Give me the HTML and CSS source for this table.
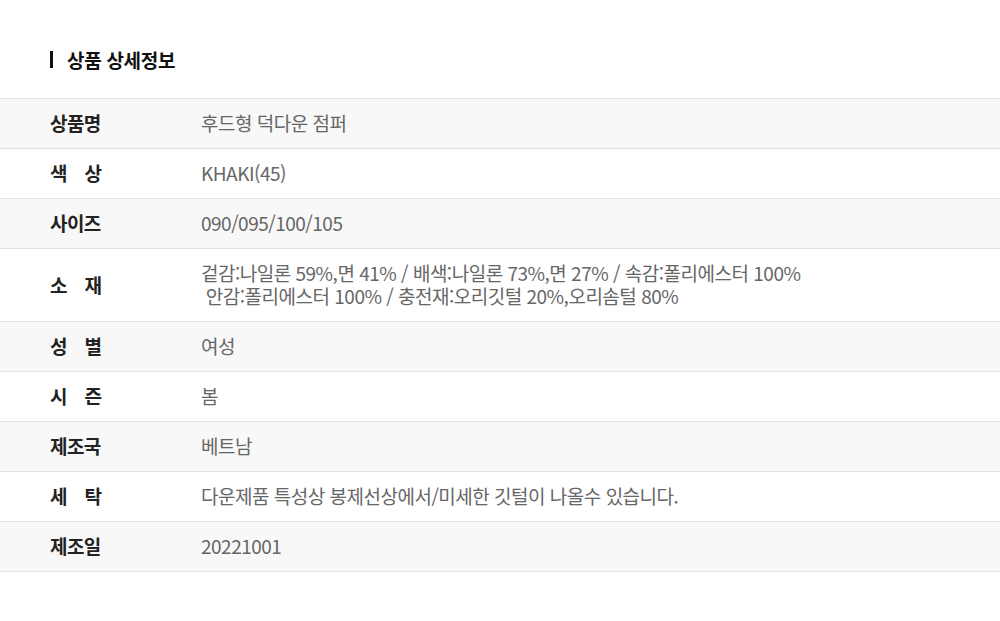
FILE: index.html
```html
<!DOCTYPE html>
<html lang="ko">
<head>
<meta charset="utf-8">
<link rel="stylesheet" href="styles.css">
</head>
<body>
<div class="page">
  <h2 class="title"><span class="bar"></span>상품 상세정보</h2>
  <div class="table">
    <div class="row gray"><div class="label"><span class="l3">상품명</span></div><div class="value">후드형 덕다운 점퍼</div></div>
    <div class="row"><div class="label"><span class="lj">색 상</span></div><div class="value">KHAKI(45)</div></div>
    <div class="row gray"><div class="label"><span class="l3">사이즈</span></div><div class="value">090/095/100/105</div></div>
    <div class="row"><div class="label"><span class="lj">소 재</span></div><div class="value">겉감:나일론 59%,면 41% / 배색:나일론 73%,면 27% / 속감:폴리에스터 100%<br>&nbsp;안감:폴리에스터 100% / 충전재:오리깃털 20%,오리솜털 80%</div></div>
    <div class="row gray"><div class="label"><span class="lj">성 별</span></div><div class="value">여성</div></div>
    <div class="row"><div class="label"><span class="lj">시 즌</span></div><div class="value">봄</div></div>
    <div class="row gray"><div class="label"><span class="l3">제조국</span></div><div class="value">베트남</div></div>
    <div class="row"><div class="label"><span class="lj">세 탁</span></div><div class="value">다운제품 특성상 봉제선상에서/미세한 깃털이 나올수 있습니다.</div></div>
    <div class="row gray"><div class="label"><span class="l3">제조일</span></div><div class="value">20221001</div></div>
  </div>
</div>
</body>
</html>
```

FILE: styles.css
```css
html, body {
  margin: 0;
  padding: 0;
  background: #fff;
}
body {
  font-family: "Noto Sans CJK KR", "Noto Sans", sans-serif;
  width: 1000px;
  height: 621px;
  overflow: hidden;
}
.page {
  padding-top: 47px;
}
.title {
  display: flex;
  align-items: center;
  margin: 0 0 27px 50px;
  height: 24px;
  font-size: 19px;
  font-weight: 700;
  color: #111;
  letter-spacing: -0.3px;
}
.bar {
  display: inline-block;
  width: 3px;
  height: 17px;
  background: #111;
  margin-right: 14px;
}
.table {
  border-top: 1px solid #e2e2e2;
}
.row {
  display: flex;
  align-items: center;
  border-bottom: 1px solid #e2e2e2;
  padding: 12px 0 14px;
  background: #fff;
}
.row.gray {
  background: #f8f8f8;
}
.label {
  width: 201px;
  padding-left: 50px;
  box-sizing: border-box;
  flex: none;
  font-size: 19px;
  line-height: 23px;
  font-weight: 700;
  color: #222;
}
.label .l3 {
  letter-spacing: -0.6px;
}
.label .lj {
  display: inline-block;
  width: 52px;
  text-align: justify;
  text-align-last: justify;
}
.value {
  font-size: 19px;
  line-height: 23px;
  color: #666;
  letter-spacing: -0.5px;
}
```
